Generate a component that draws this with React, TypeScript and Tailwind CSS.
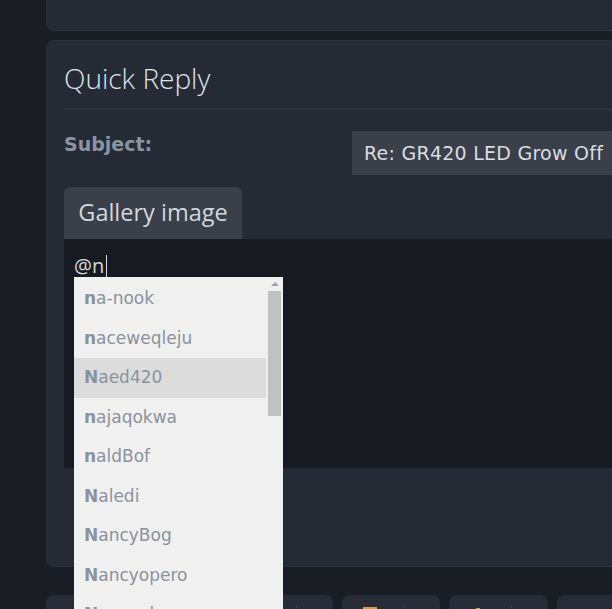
export default function App() {
  const users = [
    "na-nook",
    "naceweqleju",
    "Naed420",
    "najaqokwa",
    "naldBof",
    "Naledi",
    "NancyBog",
    "Nancyopero",
    "Nancyuh",
  ]

  return (
    <div className="relative w-[612px] h-[609px] overflow-hidden bg-[#1a1d24] pl-[46px]">
      <div className="mr-[-20px]">
        {/* previous card */}
        <div className="h-[31px] rounded-bl-lg border border-t-0 border-[#2c313b] bg-[#252a34]" />

        {/* Quick Reply */}
        <section className="mt-[9px] h-[527px] rounded-l-lg border border-r-0 border-[#2a2f39] bg-[#252a34] pl-[17px]">
          <h2 className="pt-[18px] pb-[11px] text-[28px] leading-[38px] font-light text-[#dfe3ea] [font-family:'Open_Sans',sans-serif]">
            Quick Reply
          </h2>
          <div className="h-[2px] bg-[#2d323c]" />

          <div className="mt-[21px] flex">
            <div className="w-[288px] pt-[1px] text-[19px] leading-[24px] font-bold text-[#8b94a3] [font-family:'DejaVu_Sans',sans-serif]">
              Subject:
            </div>
            <div className="flex-1 h-[44px] flex items-center bg-[#3a3f4a] pl-[12px] text-[19px] tracking-[0.25px] text-[#d9dde3] whitespace-nowrap [font-family:'DejaVu_Sans',sans-serif]">
              Re: GR420 LED Grow Off
            </div>
          </div>

          <div className="mt-[12px] w-[178px] h-[52px] flex items-center justify-center rounded-t-md bg-[#3a3f4a] text-[23.5px] text-[#d3d7de] [font-family:'Open_Sans',sans-serif]">
            Gallery image
          </div>
          <div className="h-[229px] bg-[#171a21] pl-[10px] pt-[13px]">
            <div className="flex items-center text-[20px] leading-[28px] text-[#d3d7de] [font-family:'Open_Sans',sans-serif]">
              @n
              <span className="ml-[2px] w-[1px] h-[22px] bg-[#d3d7de]" />
            </div>
          </div>
        </section>

        {/* toolbar buttons */}
        <div className="mt-[28px] flex gap-[9px]">
          {[287, 98, 99, 120].map((w, i) => (
            <div
              key={i}
              className="relative shrink-0 h-[40px] rounded-t-lg bg-[#272c36]"
              style={{ width: w }}
            >
              <div className="absolute top-[10px] right-[36px] w-[1px] h-[20px] bg-[#3a3f4a]" />
              {i === 1 && <div className="absolute top-[12px] left-[21px] w-[14px] h-[4px] bg-[#c9a24a]" />}
              {i === 2 && <div className="absolute top-[13px] left-[27px] w-[4px] h-[4px] bg-[#c9a24a]" />}
            </div>
          ))}
        </div>
      </div>

      {/* mention autocomplete */}
      <div className="absolute left-[74px] top-[277px] w-[209px] h-[340px] bg-[#f0f0f0] flex">
        <ul className="flex-1 pt-[2px] [font-family:'DejaVu_Sans',sans-serif] text-[17px] text-[#8b929d]">
          {users.map((u, i) => (
            <li
              key={u}
              className={`h-[39.5px] flex items-center pl-[10px] ${i === 2 ? "bg-[#dcdcdc]" : ""}`}
            >
              <span className="font-bold">{u[0]}</span>
              {u.slice(1)}
            </li>
          ))}
        </ul>
        <div className="w-[17px] flex flex-col items-center">
          <div className="h-[14px] flex items-center justify-center">
            <div className="w-0 h-0 border-l-[4px] border-r-[4px] border-b-[4px] border-l-transparent border-r-transparent border-b-[#a3a3a3]" />
          </div>
          <div className="w-[13px] h-[125px] bg-[#c1c1c1]" />
        </div>
      </div>
    </div>
  )
}
